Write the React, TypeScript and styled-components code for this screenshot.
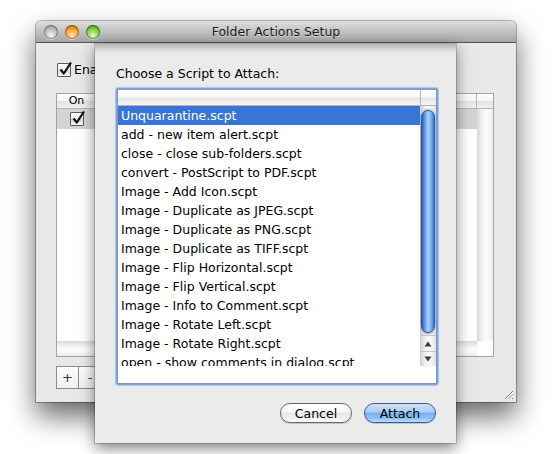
import React from "react";
import styled, { createGlobalStyle } from "styled-components";

const FONT = `"Lucida Grande", "DejaVu Sans", "Liberation Sans", sans-serif`;

const Global = createGlobalStyle`
  html, body { margin: 0; padding: 0; background: #fff; }
  body { font-family: ${FONT}; }
  * { box-sizing: border-box; }
`;

const Desktop = styled.div`
  position: relative;
  width: 552px;
  height: 454px;
  overflow: hidden;
  background: #fff;
  font-family: ${FONT};
`;

const Window = styled.div`
  position: absolute;
  left: 36px;
  top: 21px;
  width: 480px;
  height: 381px;
  display: flex;
  flex-direction: column;
  background: #e8e8e8;
  border-radius: 5px 5px 0 0;
  box-shadow: 0 0 0 1px rgba(0, 0, 0, 0.28), 0 14px 28px rgba(0, 0, 0, 0.6);
`;

const TitleBar = styled.div`
  flex: none;
  height: 22px;
  display: grid;
  grid-template-columns: 1fr auto 1fr;
  align-items: center;
  background: linear-gradient(#dedede, #a6a6a6);
  border-bottom: 1px solid #525252;
  border-radius: 5px 5px 0 0;
`;

const Lights = styled.div`
  display: flex;
  gap: 7px;
  padding-left: 8px;
`;

const lightColors: Record<string, [string, string, string]> = {
  gray: ["#f4f4f4", "#b9b9b9", "#8c8c8c"],
  red: ["#ffe6a8", "#f49a2c", "#b85a08"],
  green: ["#e4ffc4", "#78c93c", "#2f7e12"],
};

const Light = styled.span<{ $kind: "gray" | "red" | "green" }>`
  width: 14px;
  height: 14px;
  border-radius: 50%;
  background: radial-gradient(
    circle at 50% 75%,
    ${(p) => lightColors[p.$kind][0]} 0%,
    ${(p) => lightColors[p.$kind][1]} 55%,
    ${(p) => lightColors[p.$kind][2]} 100%
  );
  box-shadow: inset 0 0 0 1px rgba(0, 0, 0, 0.35), 0 1px 0 rgba(255, 255, 255, 0.5);
`;

const Title = styled.div`
  font-size: 12.5px;
  color: #1c1c1c;
  text-shadow: 0 1px 0 rgba(255, 255, 255, 0.45);
`;

const Body = styled.div`
  flex: 1;
  display: flex;
  flex-direction: column;
  padding: 19px 22px 13px 20px;
`;

const CheckRow = styled.label`
  display: flex;
  align-items: center;
  gap: 3px;
  height: 15px;
  padding-left: 1px;
  font-size: 12.5px;
  color: #000;
`;

const CheckBox = styled.span`
  position: relative;
  flex: none;
  width: 14px;
  height: 14px;
  border: 1px solid #5c5c5c;
  border-radius: 1px;
  background: linear-gradient(#ffffff, #e9e9e9 50%, #d8d8d8 51%, #f6f6f6);
  svg {
    position: absolute;
    left: 0px;
    top: -3px;
  }
`;

const Check = () => (
  <CheckBox>
    <svg width="15" height="15" viewBox="0 0 15 15">
      <path d="M2.5 8.5 L5.8 12.5 L13 1.5" fill="none" stroke="#111" strokeWidth="2.2" strokeLinejoin="round" />
    </svg>
  </CheckBox>
);

const Table = styled.div`
  margin-top: 16px;
  height: 264px;
  border: 1px solid #a3a3a3;
  background: #fff;
  display: grid;
  grid-template-columns: 1fr 16px;
  grid-template-rows: 15px 1fr 15px;
`;

const HeaderStrip = styled.div`
  display: flex;
  background: linear-gradient(#ffffff 0%, #f6f6f6 45%, #e4e4e4 55%, #f0f0f0 100%);
  border-bottom: 1px solid #b3b3b3;
`;

const HeaderCell = styled.div<{ $w?: number }>`
  ${(p) => (p.$w ? `width: ${p.$w}px; flex: none;` : "flex: 1;")}
  font-size: 11px;
  line-height: 14px;
  text-align: center;
  color: #000;
  border-right: 1px solid #b3b3b3;
`;

const TableBody = styled.div`
  display: flex;
  flex-direction: column;
`;

const TableRow = styled.div<{ $sel?: boolean }>`
  height: 20px;
  display: flex;
  align-items: center;
  background: ${(p) => (p.$sel ? "#d4d4d4" : "transparent")};
`;

const OnCell = styled.div`
  width: 40px;
  display: flex;
  justify-content: center;
`;

const VTrack = styled.div`
  background: linear-gradient(to right, #d6d6d6, #f4f4f4 35%, #fdfdfd 60%, #ececec);
`;

const HTrack = styled.div`
  background: linear-gradient(#d9d9d9, #f4f4f4 35%, #fdfdfd 60%, #ececec);
`;

const Corner = styled.div`
  background: #fff;
`;

const Footer = styled.div`
  margin-top: 9px;
  display: flex;
`;

const SquareButton = styled.button`
  width: 23px;
  height: 23px;
  padding: 0;
  border: 1px solid #8c8c8c;
  background: linear-gradient(#fcfcfc, #f0f0f0);
  font-family: ${FONT};
  font-size: 13px;
  line-height: 19px;
  color: #333;
  & + & {
    border-left: none;
  }
`;

const Grip = styled.svg`
  position: absolute;
  right: 2px;
  bottom: 2px;
`;

const Sheet = styled.div`
  position: absolute;
  left: 59px;
  top: 23px;
  width: 361px;
  height: 399px;
  display: flex;
  flex-direction: column;
  padding: 22px 18px 20px 21px;
  background: #ebebeb;
  box-shadow: 0 0 0 1px rgba(0, 0, 0, 0.18), 0 5px 14px rgba(0, 0, 0, 0.5),
    inset 0 12px 10px -10px rgba(0, 0, 0, 0.35);
`;

const SheetLabel = styled.div`
  font-size: 12.5px;
  line-height: 16px;
  height: 16px;
  color: #000;
`;

const ListFrame = styled.div`
  margin-top: 6px;
  height: 297px;
  border-radius: 3px;
  padding: 1px;
  background: #93b8ea;
  box-shadow: 0 0 1px 1px rgba(120, 165, 230, 0.55), inset 0 0 0 1px #78a2dc;
`;

const ListInner = styled.div`
  height: 100%;
  border: 1px solid #7d99c4;
  background: #fff;
  display: grid;
  grid-template-columns: 1fr 16px;
  grid-template-rows: 16px 260px 1fr;
`;

const ListHeader = styled.div<{ $corner?: boolean }>`
  background: linear-gradient(#ffffff 0%, #f7f7f7 45%, #e6e6e6 55%, #f3f3f3 100%);
  border-bottom: 1px solid #b4b4b4;
  ${(p) => (p.$corner ? "border-left: 1px solid #b4b4b4;" : "")}
`;

const Rows = styled.div`
  overflow: hidden;
`;

const Row = styled.div<{ $sel?: boolean }>`
  height: 19px;
  line-height: 19px;
  padding-left: 3px;
  font-size: 12.5px;
  white-space: nowrap;
  color: ${(p) => (p.$sel ? "#fff" : "#000")};
  background: ${(p) => (p.$sel ? "#3875d7" : "transparent")};
`;

const Scroller = styled.div`
  display: flex;
  flex-direction: column;
  background: linear-gradient(to right, #cfcfcf, #eeeeee 30%, #fbfbfb 60%, #e3e3e3);
`;

const ThumbTrack = styled.div`
  flex: 1;
  padding: 4px 1px 0 1px;
`;

const Thumb = styled.div`
  height: 223px;
  border-radius: 7px;
  border: 1px solid #2b55a0;
  background: linear-gradient(
    to right,
    #2c5fbf 0%,
    #5b94e6 22%,
    #a9d3ff 50%,
    #79b3f5 75%,
    #3a72cf 100%
  );
  box-shadow: 0 1px 2px rgba(0, 0, 0, 0.35), 0 -1px 2px rgba(0, 0, 0, 0.25);
`;

const ArrowBox = styled.div`
  flex: none;
  display: flex;
  flex-direction: column;
  border-top: 1px solid #c4c4c4;
`;

const ArrowButton = styled.div`
  height: 15px;
  display: flex;
  align-items: center;
  justify-content: center;
  & + & {
    border-top: 1px solid #c4c4c4;
  }
`;

const ListFoot = styled.div`
  grid-column: 1 / span 2;
  background: #fff;
`;

const ButtonRow = styled.div`
  margin-top: 18px;
  display: flex;
  justify-content: flex-end;
  gap: 12px;
  padding-right: 2px;
`;

const PushButton = styled.button<{ $primary?: boolean }>`
  width: 72px;
  height: 20px;
  padding: 0;
  border-radius: 10px;
  font-family: ${FONT};
  font-size: 12.5px;
  line-height: 17px;
  color: #000;
  border: 1px solid ${(p) => (p.$primary ? "#3a5a93" : "#676767")};
  background: ${(p) =>
    p.$primary
      ? "linear-gradient(#d2e4f8 0%, #aacbf2 45%, #76aef0 52%, #8fc3f6 80%, #b3e0fd 100%)"
      : "linear-gradient(#ffffff 0%, #f6f6f6 45%, #e6e6e6 52%, #f0f0f0 80%, #fbfbfb 100%)"};
  box-shadow: 0 1px 1px rgba(0, 0, 0, 0.18);
`;

const scripts = [
  "Unquarantine.scpt",
  "add - new item alert.scpt",
  "close - close sub-folders.scpt",
  "convert - PostScript to PDF.scpt",
  "Image - Add Icon.scpt",
  "Image - Duplicate as JPEG.scpt",
  "Image - Duplicate as PNG.scpt",
  "Image - Duplicate as TIFF.scpt",
  "Image - Flip Horizontal.scpt",
  "Image - Flip Vertical.scpt",
  "Image - Info to Comment.scpt",
  "Image - Rotate Left.scpt",
  "Image - Rotate Right.scpt",
  "open - show comments in dialog.scpt",
];

export default function App() {
  return (
    <Desktop>
      <Global />
      <Window>
        <TitleBar>
          <Lights>
            <Light $kind="gray" />
            <Light $kind="red" />
            <Light $kind="green" />
          </Lights>
          <Title>Folder Actions Setup</Title>
          <div />
        </TitleBar>
        <Body>
          <CheckRow>
            <Check />
            Enable Folder Actions
          </CheckRow>
          <Table>
            <HeaderStrip>
              <HeaderCell $w={40}>On</HeaderCell>
              <HeaderCell />
            </HeaderStrip>
            <HeaderStrip />
            <TableBody>
              <TableRow $sel>
                <OnCell>
                  <Check />
                </OnCell>
              </TableRow>
            </TableBody>
            <VTrack />
            <HTrack />
            <Corner />
          </Table>
          <Footer>
            <SquareButton>+</SquareButton>
            <SquareButton>-</SquareButton>
          </Footer>
        </Body>
        <Grip width="11" height="11" viewBox="0 0 11 11">
          <path d="M10 2 L2 10 M10 5.5 L5.5 10 M10 9 L9 10" stroke="#7a7a7a" strokeWidth="1" />
          <path d="M10 3 L3 10 M10 6.5 L6.5 10" stroke="#fff" strokeWidth="1" />
        </Grip>
        <Sheet>
          <SheetLabel>Choose a Script to Attach:</SheetLabel>
          <ListFrame>
            <ListInner>
              <ListHeader />
              <ListHeader $corner />
              <Rows>
                {scripts.map((s, i) => (
                  <Row key={s} $sel={i === 0}>
                    {s}
                  </Row>
                ))}
              </Rows>
              <Scroller>
                <ThumbTrack>
                  <Thumb />
                </ThumbTrack>
                <ArrowBox>
                  <ArrowButton>
                    <svg width="8" height="6" viewBox="0 0 8 6">
                      <path d="M4 0.5 L7.5 5.5 L0.5 5.5 Z" fill="#3c3c3c" />
                    </svg>
                  </ArrowButton>
                  <ArrowButton>
                    <svg width="8" height="6" viewBox="0 0 8 6">
                      <path d="M0.5 0.5 L7.5 0.5 L4 5.5 Z" fill="#3c3c3c" />
                    </svg>
                  </ArrowButton>
                </ArrowBox>
              </Scroller>
              <ListFoot />
            </ListInner>
          </ListFrame>
          <ButtonRow>
            <PushButton>Cancel</PushButton>
            <PushButton $primary>Attach</PushButton>
          </ButtonRow>
        </Sheet>
      </Window>
    </Desktop>
  );
}
